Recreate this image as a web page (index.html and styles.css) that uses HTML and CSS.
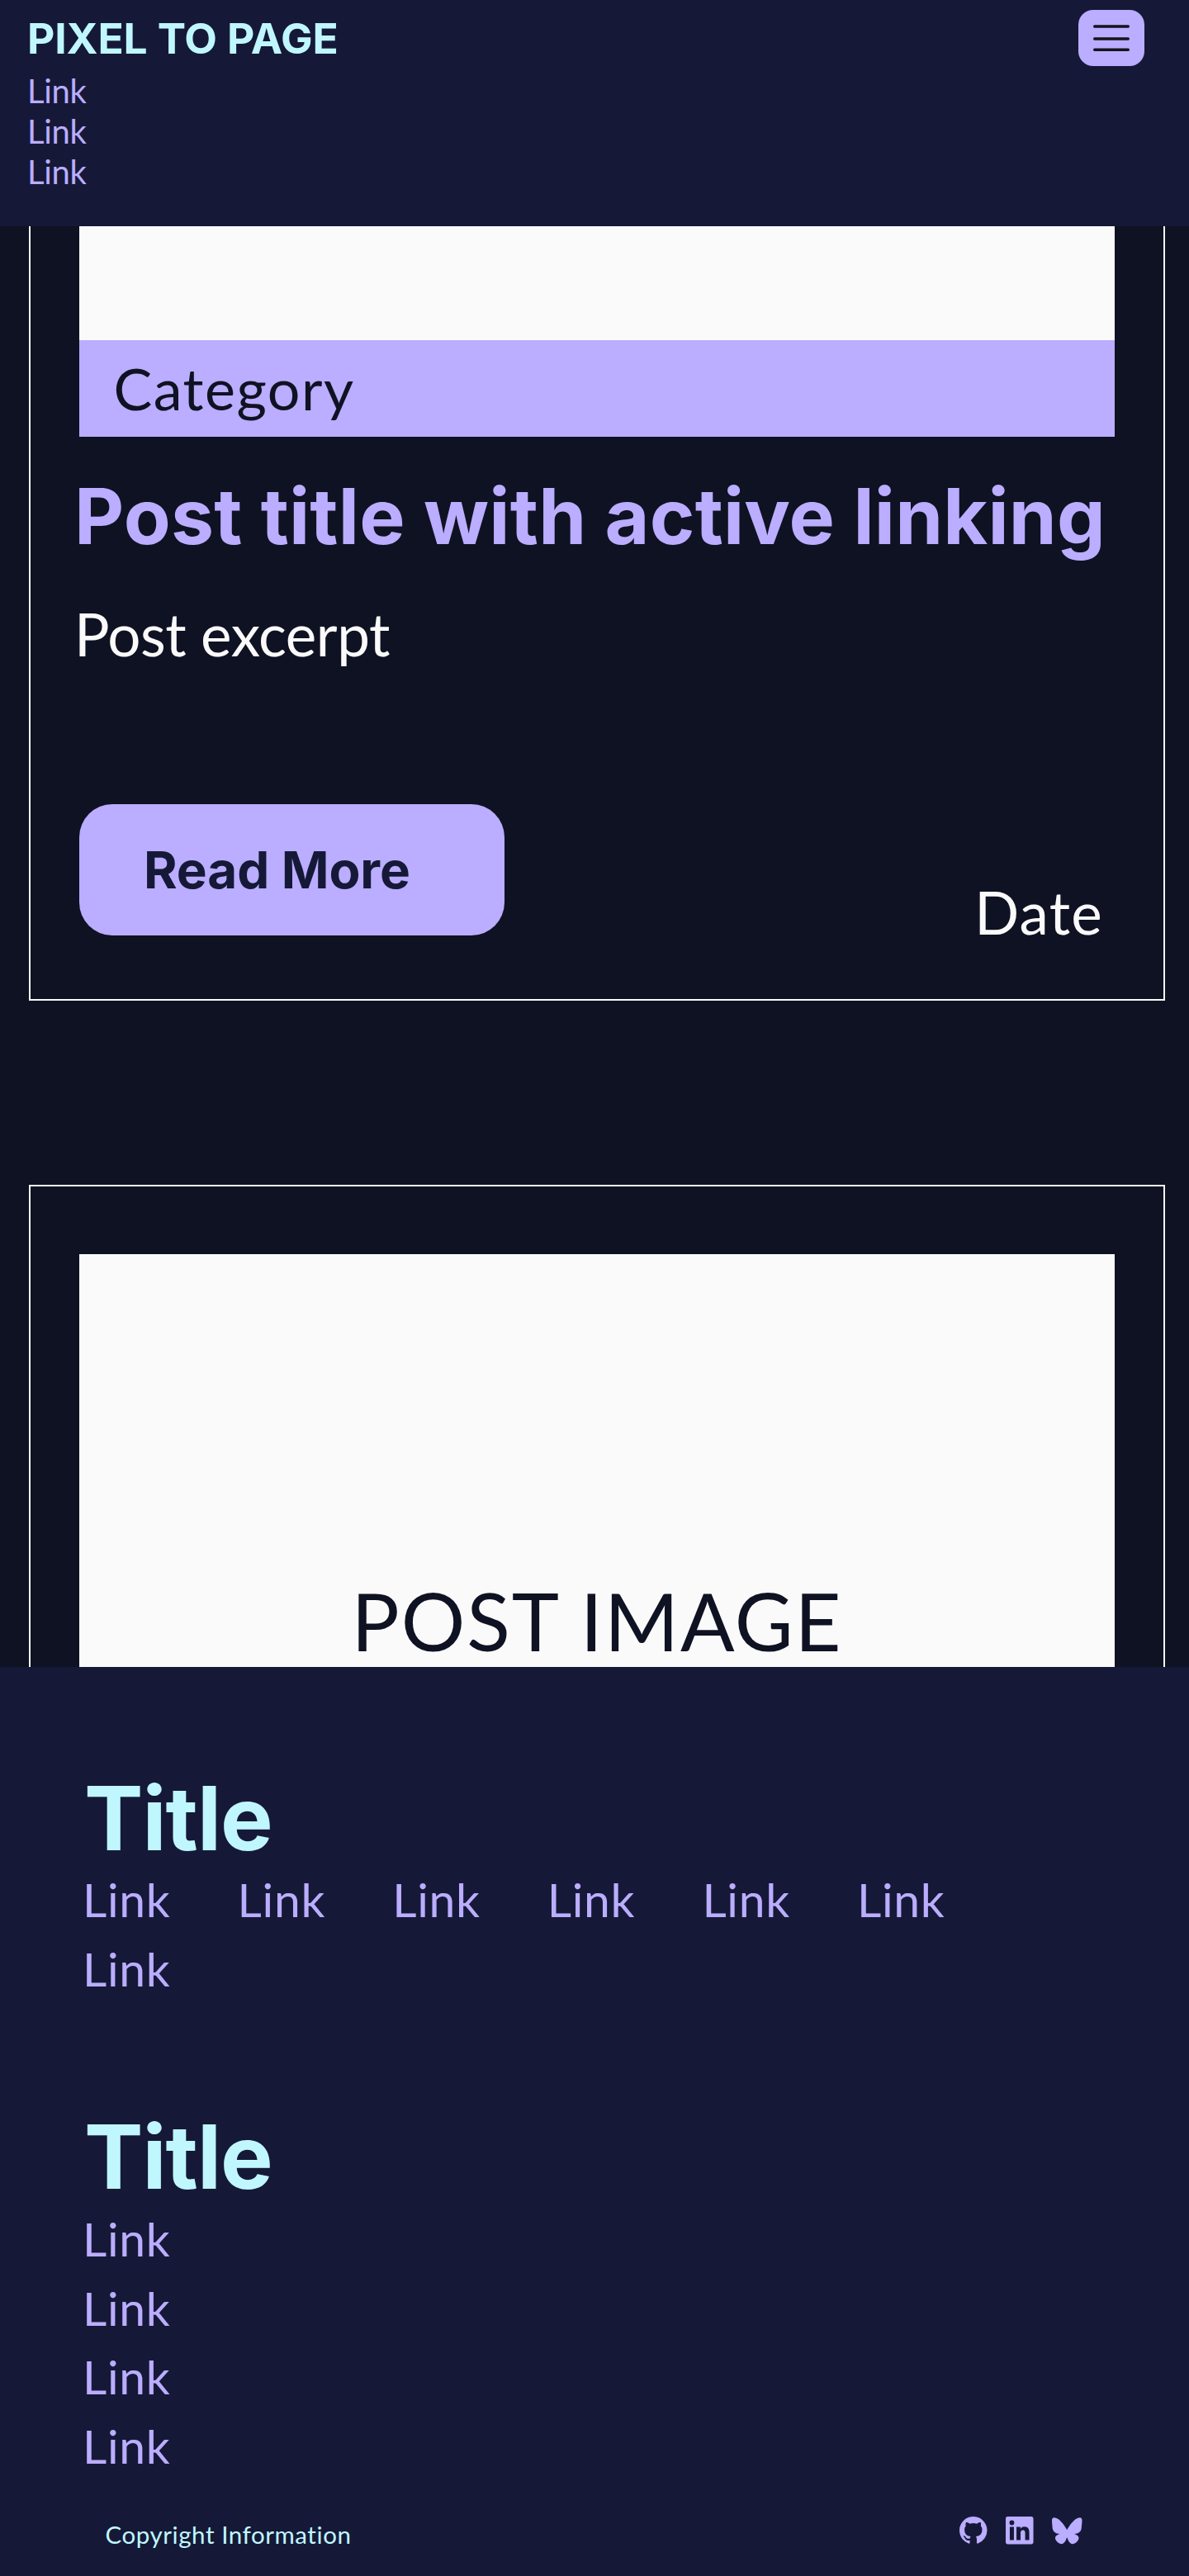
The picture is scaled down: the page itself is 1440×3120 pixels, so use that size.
FILE: index.html
```
<!DOCTYPE html>
<html lang="en">
<head>
  <meta charset="utf-8">
  <title>Pixel to Page</title>
  <link rel="stylesheet" href="styles.css">
</head>
<body>
  <header class="site-header">
    <div class="brand">
      <div class="brand-name">PIXEL TO PAGE</div>
      <nav class="header-nav">
        <a>Link</a>
        <a>Link</a>
        <a>Link</a>
      </nav>
    </div>
    <button class="menu-button" aria-label="Menu">
      <svg width="44" height="32" viewBox="0 0 44 32" stroke="#14141c" stroke-width="3.4" stroke-linecap="round">
        <path d="M1.7 2H42.3M1.7 17H42.3M1.7 30.3H42.3"/>
      </svg>
    </button>
  </header>

  <main class="posts">
    <article class="card card-first">
      <div class="post-image post-image-end"></div>
      <div class="category">Category</div>
      <h2 class="post-title">Post title with active linking</h2>
      <p class="excerpt">Post excerpt</p>
      <div class="card-footer">
        <a class="read-more">Read More</a>
        <span class="date">Date</span>
      </div>
    </article>
    <article class="card card-next">
      <div class="post-image post-image-start">POST IMAGE</div>
    </article>
  </main>

  <footer class="site-footer">
    <section>
      <h3 class="footer-title">Title</h3>
      <nav class="footer-links footer-links-wide">
        <a>Link</a><a>Link</a><a>Link</a><a>Link</a><a>Link</a><a>Link</a><a>Link</a>
      </nav>
    </section>
    <section class="footer-second">
      <h3 class="footer-title">Title</h3>
      <nav class="footer-links footer-links-stacked">
        <a>Link</a><a>Link</a><a>Link</a><a>Link</a>
      </nav>
    </section>
    <div class="bottom-bar">
      <span class="copyright">Copyright Information</span>
      <div class="social">
        <svg width="33.5" height="33.5" viewBox="0 0 16 16"><path d="M8 0C3.58 0 0 3.58 0 8c0 3.54 2.29 6.53 5.47 7.59.4.07.55-.17.55-.38 0-.19-.01-.82-.01-1.49-2.01.37-2.53-.49-2.69-.94-.09-.23-.48-.94-.82-1.13-.28-.15-.68-.52-.01-.53.63-.01 1.08.58 1.23.82.72 1.21 1.87.87 2.33.66.07-.52.28-.87.51-1.07-1.78-.2-3.64-.89-3.64-3.95 0-.87.31-1.59.82-2.15-.08-.2-.36-1.02.08-2.12 0 0 .67-.21 2.2.82.64-.18 1.32-.27 2-.27s1.36.09 2 .27c1.53-1.04 2.2-.82 2.2-.82.44 1.1.16 1.92.08 2.12.51.56.82 1.27.82 2.15 0 3.07-1.87 3.75-3.65 3.95.29.25.54.73.54 1.48 0 1.07-.01 1.93-.01 2.2 0 .21.15.46.55.38A8.01 8.01 0 0 0 16 8c0-4.42-3.58-8-8-8"/></svg>
        <svg width="33.5" height="33.5" viewBox="0 0 24 24"><path d="M20.447 20.452h-3.554v-5.569c0-1.328-.027-3.037-1.852-3.037-1.853 0-2.136 1.445-2.136 2.939v5.667H9.351V9h3.414v1.561h.046c.477-.9 1.637-1.85 3.37-1.85 3.601 0 4.267 2.37 4.267 5.455v6.286zM5.337 7.433a2.062 2.062 0 0 1-2.063-2.065 2.064 2.064 0 1 1 2.063 2.065zm1.782 13.019H3.555V9h3.564v11.452zM22.225 0H1.771C.792 0 0 .774 0 1.729v20.542C0 23.227.792 24 1.771 24h20.451C23.2 24 24 23.227 24 22.271V1.729C24 .774 23.2 0 22.222 0h.003z"/></svg>
        <svg width="36.5" height="33.5" viewBox="0 0 576 528"><path d="M125 52c66 50 137 150 163 204 26-54 97-154 163-204 48-36 125-63 125 25 0 18-10 148-16 169-21 73-95 92-161 81 116 20 145 85 81 151-121 124-174-31-187-71-3-7-4-11-5-8-1-3-2 1-5 8-13 40-66 195-187 71-64-66-35-131 81-151-66 11-140-8-161-81C10 225 0 95 0 77 0-11 77 16 125 52"/></svg>
      </div>
    </div>
  </footer>
</body>
</html>
```
FILE: styles.css
```
* { box-sizing: border-box; margin: 0; padding: 0; }

body {
  width: 1440px;
  height: 3120px;
  overflow: hidden;
  background: #0f1222;
  color: #fafafa;
  font-family: Lato, "Liberation Sans", sans-serif;
  font-weight: 400;
}

/* Header */
.site-header {
  display: flex;
  justify-content: space-between;
  align-items: flex-start;
  height: 274px;
  padding: 12px 54px 0 33px;
  background: #151937;
}
.brand-name {
  font: 700 51.5px/68px Inter, sans-serif;
  letter-spacing: -0.13px;
  color: #c0f7ff;
}
.header-nav {
  display: flex;
  flex-direction: column;
  margin-top: 6px;
  font-size: 40px;
  line-height: 49px;
  letter-spacing: -0.32px;
  color: #bbadff;
}
.menu-button {
  display: flex;
  justify-content: center;
  align-items: center;
  width: 80px;
  height: 68px;
  border: 0;
  border-radius: 18px;
  background: #bbadff;
}

/* Post cards */
.posts {
  height: 1744.5px;
  padding: 0 29px 0 35px;
}
.card {
  padding: 0 59px;
  border: 2px solid #fafafa;
}
.card-first {
  height: 938px;
  border-top: 0;
}
.card-next {
  height: 584px;
  margin-top: 222.5px;
  padding-top: 82px;
  border-bottom: 0;
}
.post-image { background: #fafafa; }
.post-image-end { height: 138px; }
.post-image-start {
  display: flex;
  justify-content: center;
  align-items: flex-end;
  height: 500px;
  padding-bottom: 8px;
  font-size: 97px;
  line-height: 97px;
  letter-spacing: 1.93px;
  color: #0f1222;
}
.category {
  height: 117px;
  padding-left: 41.5px;
  background: #bbadff;
  color: #0f1222;
  font-size: 70px;
  line-height: 117px;
  letter-spacing: 1.5px;
}
.post-title {
  margin: 46px -20px 0 -6px;
  font: 700 93px/100px Inter, sans-serif;
  letter-spacing: 0.2px;
  white-space: nowrap;
  color: #bbadff;
}
.excerpt {
  margin: 50px 0 0 -6px;
  font-size: 71px;
  line-height: 86px;
  letter-spacing: -0.46px;
}
.card-footer {
  display: flex;
  justify-content: space-between;
  align-items: flex-end;
  margin-top: 162.5px;
  padding-right: 14px;
}
.read-more {
  width: 515px;
  height: 159px;
  padding-left: 78px;
  border-radius: 40px;
  background: #bbadff;
  color: #151937;
  font: 700 62px/159px Inter, sans-serif;
  letter-spacing: -0.1px;
}
.date {
  font-size: 71px;
  line-height: 57px;
  letter-spacing: 1.28px;
}

/* Footer */
.site-footer {
  height: 1101.5px;
  padding: 127px 129.5px 0 100px;
  background: #151937;
}
.footer-title {
  margin-left: 2px;
  font: 700 107px/112px Inter, sans-serif;
  letter-spacing: -0.96px;
  color: #c0f7ff;
}
.footer-links {
  display: grid;
  font-size: 57px;
  letter-spacing: 0.68px;
  color: #bbadff;
}
.footer-links-wide {
  grid-template-columns: repeat(6, 187.6px);
  line-height: 84px;
}
.footer-second { margin-top: 130.5px; }
.footer-links-stacked {
  margin-top: 2px;
  line-height: 83.5px;
}
.bottom-bar {
  display: flex;
  justify-content: space-between;
  align-items: flex-start;
  margin-top: 44px;
  padding-left: 27.5px;
}
.copyright {
  padding-top: 3.5px;
  font-size: 29.5px;
  line-height: 36px;
  letter-spacing: 0.56px;
  color: #c0f7ff;
}
.social {
  display: flex;
  gap: 22.5px;
  fill: #bbadff;
}
```
